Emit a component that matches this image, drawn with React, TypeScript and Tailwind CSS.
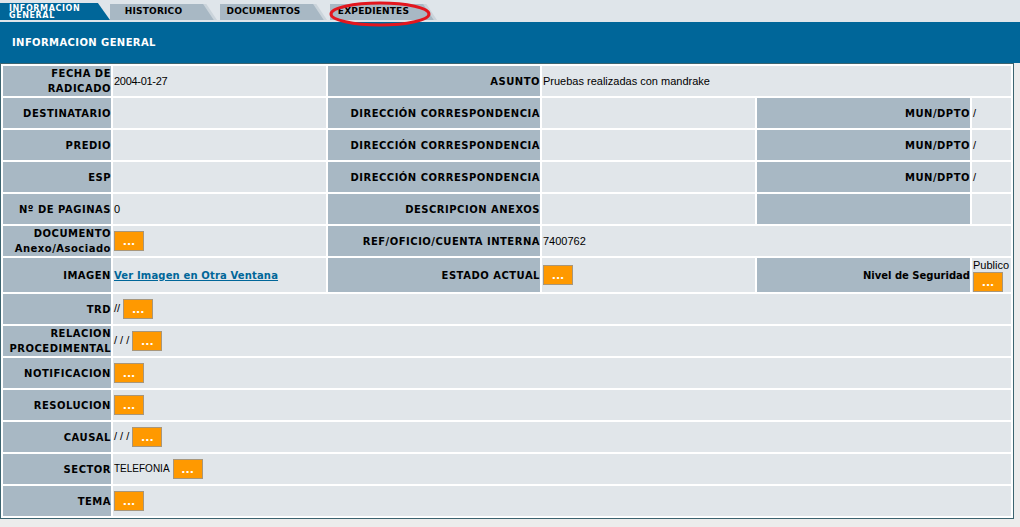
import React from "react";

const LABEL =
  "bg-[#a8b8c4] p-0 text-right align-middle font-['DejaVu_Sans',sans-serif] text-[10px] font-bold leading-[15px] tracking-[0.5px] text-black";
const VALUE =
  "bg-[#e1e6ea] py-0 pl-px pr-0 text-left align-middle font-['Liberation_Sans',Arial,sans-serif] text-[11px] leading-[13px] text-black";

const DotsButton = ({ block = false }: { block?: boolean }) => (
  <button
    type="button"
    className={`${block ? "flex" : "inline-flex"} h-[20px] w-[30px] items-end justify-center border border-[#a8967a] bg-[#ff9900] pb-[3px] align-middle font-['DejaVu_Sans',sans-serif] text-[11px] font-bold leading-none text-white`}
  >
    ...
  </button>
);

const Tab = ({ label }: { label: string }) => (
  <div className="ml-[3px] h-[16px] w-[107px] bg-[#cbd4db] [clip-path:polygon(0_0,90%_0,100%_100%,0_100%)]">
    <div className="flex h-full items-center justify-center bg-[#a8b8c4] pr-[20px] font-['DejaVu_Sans',sans-serif] text-[9px] font-bold tracking-[0.2px] text-black [clip-path:polygon(0_0,87%_0,97%_100%,0_100%)]">
      {label}
    </div>
  </div>
);

const SimpleRow = ({ label, children }: { label: React.ReactNode; children?: React.ReactNode }) => (
  <tr className="h-[30px]">
    <td className={LABEL}>{label}</td>
    <td className={VALUE} colSpan={5}>
      {children}
    </td>
  </tr>
);

export default function App() {
  return (
    <div className="min-h-[527px] w-[1020px] bg-[#ececec]">
      {/* tabs */}
      <div className="relative flex h-[22px] items-end bg-[#dfe5ea] pb-[2px]">
        <div className="flex h-[17px] w-[110px] flex-col justify-center bg-[#006699] pl-[9px] font-['DejaVu_Sans',sans-serif] text-[8px] font-bold leading-[7px] tracking-[0.6px] text-white [clip-path:polygon(0_0,89%_0,100%_100%,0_100%)]">
          <span>INFORMACION</span>
          <span>GENERAL</span>
        </div>
        <div className="-ml-[3px] flex">
          <Tab label="HISTORICO" />
          <Tab label="DOCUMENTOS" />
          <Tab label="EXPEDIENTES" />
        </div>
        <svg className="absolute left-[328px] top-0 h-[28px] w-[104px]" viewBox="0 0 104 28">
          <ellipse cx="52" cy="14" rx="49" ry="11" fill="none" stroke="#e3161e" strokeWidth="3" />
        </svg>
      </div>

      {/* header band */}
      <div className="flex h-[41px] items-center bg-[#006699] pl-[12px] font-['DejaVu_Sans',sans-serif] text-[10px] font-bold tracking-[0.4px] text-white">
        INFORMACION GENERAL
      </div>

      <table className="w-[1014px] table-fixed border-separate border-spacing-[2px] border border-[#3c6470] bg-white">
        <colgroup>
          <col className="w-[108px]" />
          <col className="w-[213px]" />
          <col className="w-[212px]" />
          <col className="w-[213px]" />
          <col className="w-[213px]" />
          <col className="w-[39px]" />
        </colgroup>
        <tbody>
          <tr className="h-[30px]">
            <td className={LABEL}>
              FECHA DE
              <br />
              RADICADO
            </td>
            <td className={`${VALUE} tracking-[-0.3px]`}>2004-01-27</td>
            <td className={LABEL}>ASUNTO</td>
            <td className={VALUE} colSpan={3}>
              Pruebas realizadas con mandrake
            </td>
          </tr>
          {["DESTINATARIO", "PREDIO", "ESP"].map((label) => (
            <tr key={label} className="h-[30px]">
              <td className={LABEL}>{label}</td>
              <td className={VALUE}></td>
              <td className={LABEL}>DIRECCIÓN CORRESPONDENCIA</td>
              <td className={VALUE}></td>
              <td className={LABEL}>MUN/DPTO</td>
              <td className={VALUE}>/</td>
            </tr>
          ))}
          <tr className="h-[30px]">
            <td className={LABEL}>Nº DE PAGINAS</td>
            <td className={VALUE}>0</td>
            <td className={LABEL}>DESCRIPCION ANEXOS</td>
            <td className={VALUE}></td>
            <td className={LABEL}></td>
            <td className={VALUE}></td>
          </tr>
          <tr className="h-[30px]">
            <td className={LABEL}>
              DOCUMENTO
              <br />
              Anexo/Asociado
            </td>
            <td className={VALUE}>
              <DotsButton />
            </td>
            <td className={LABEL}>REF/OFICIO/CUENTA INTERNA</td>
            <td className={VALUE} colSpan={3}>
              7400762
            </td>
          </tr>
          <tr className="h-[34px]">
            <td className={LABEL}>IMAGEN</td>
            <td className={VALUE}>
              <a
                href="#"
                className="font-['DejaVu_Sans',sans-serif] text-[10px] font-bold tracking-[0.15px] text-[#006699] underline"
              >
                Ver Imagen en Otra Ventana
              </a>
            </td>
            <td className={LABEL}>ESTADO ACTUAL</td>
            <td className={VALUE}>
              <DotsButton />
            </td>
            <td className={`${LABEL} tracking-normal`}>Nivel de Seguridad</td>
            <td className={VALUE}>
              <div>Publico</div>
              <DotsButton block />
            </td>
          </tr>
          <SimpleRow label="TRD">
            // <DotsButton />
          </SimpleRow>
          <SimpleRow
            label={
              <>
                RELACION
                <br />
                PROCEDIMENTAL
              </>
            }
          >
            / / / <DotsButton />
          </SimpleRow>
          <SimpleRow label="NOTIFICACION">
            <DotsButton />
          </SimpleRow>
          <SimpleRow label="RESOLUCION">
            <DotsButton />
          </SimpleRow>
          <SimpleRow label="CAUSAL">
            / / / <DotsButton />
          </SimpleRow>
          <SimpleRow label="SECTOR">
            <span className="text-[10px]">TELEFONIA</span> <DotsButton />
          </SimpleRow>
          <SimpleRow label="TEMA">
            <DotsButton />
          </SimpleRow>
        </tbody>
      </table>
    </div>
  );
}
